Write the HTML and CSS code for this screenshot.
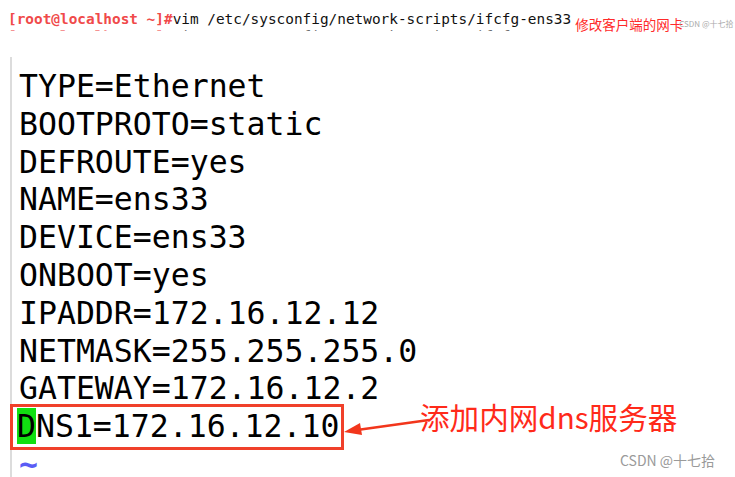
FILE: index.html
```html
<!DOCTYPE html>
<html lang="zh">
<head>
<meta charset="utf-8">
<link rel="stylesheet" href="styles.css">
</head>
<body>
<div class="shot">
  <div class="term">
    <div class="row">
      <div class="cmd"><span class="prompt">[root@localhost ~]#</span>vim /etc/sysconfig/network-scripts/ifcfg-ens33</div>
      <div class="note-top">修改客户端的网卡</div>
      <div class="wm-top">CSDN @十七拾</div>
    </div>
    <div class="clip"><div class="cmd"><span class="prompt">[root@localhost ~]#</span>vim /etc/sysconfig/network-scripts/ifcfg-ens33</div></div>
  </div>
  <div class="editor">
    <div class="gutter"></div>
    <div class="lines">
      <div class="line">TYPE=Ethernet</div>
      <div class="line">BOOTPROTO=static</div>
      <div class="line">DEFROUTE=yes</div>
      <div class="line">NAME=ens33</div>
      <div class="line">DEVICE=ens33</div>
      <div class="line">ONBOOT=yes</div>
      <div class="line">IPADDR=172.16.12.12</div>
      <div class="line">NETMASK=255.255.255.0</div>
      <div class="line">GATEWAY=172.16.12.2</div>
      <div class="line boxed"><span class="cursor">D</span>NS1=172.16.12.10</div>
      <div class="line tilde">~</div>
    </div>
  </div>
  <svg class="arrow" width="90" height="30" viewBox="0 0 90 30">
    <line x1="86" y1="6" x2="14" y2="16" stroke="#f2361c" stroke-width="2.5"/>
    <polygon points="1,18 17,9 19,21" fill="#f2361c"/>
  </svg>
  <div class="note-dns">添加内网dns服务器</div>
  <div class="wm-bottom">CSDN @十七拾</div>
</div>
</body>
</html>
```
FILE: styles.css
```css
html, body {
  margin: 0;
  padding: 0;
  background: #ffffff;
}
.shot {
  position: relative;
  width: 735px;
  height: 477px;
  overflow: hidden;
  background: #ffffff;
}
.term {
  display: flex;
  flex-direction: column;
  padding: 8px 0 0 8px;
}
.row {
  display: flex;
  align-items: flex-end;
  height: 21px;
}
.cmd {
  font-family: "DejaVu Sans Mono", monospace;
  font-size: 14.4px;
  line-height: 20px;
  color: #111;
  white-space: pre;
}
.prompt {
  color: #f04a4a;
  font-weight: bold;
}
.clip {
  height: 2px;
  overflow: hidden;
  opacity: 0.6;
}
.clip .cmd {
  line-height: 13px;
  margin-top: 1px;
}
.note-top {
  font-family: "Noto Sans CJK SC", sans-serif;
  font-size: 13.5px;
  line-height: 18px;
  color: #ff2a2a;
  margin-left: 4px;
  margin-bottom: -4px;
}
.wm-top {
  font-family: "Noto Sans CJK SC", sans-serif;
  font-size: 8px;
  color: #aaaaaa;
  margin-left: -4px;
}
.editor {
  display: flex;
  margin-top: 26px;
}
.gutter {
  width: 2px;
  margin-left: 10px;
  background: #dcdcdc;
  height: 430px;
}
.lines {
  padding: 11px 0 0 7px;
  font-family: "DejaVu Sans Mono", monospace;
  font-size: 31.5px;
  line-height: 37.8px;
  color: #000;
}
.line {
  white-space: pre;
}
.boxed {
  width: fit-content;
  margin: -4px 0 -4px -9px;
  padding: 1px 2px 1px 4px;
  border: 3px solid #f0402a;
}
.cursor {
  background: #11e011;
}
.tilde {
  color: #5a5cf5;
  font-weight: bold;
}
.arrow {
  position: absolute;
  left: 343px;
  top: 414px;
}
.note-dns {
  position: absolute;
  left: 420px;
  top: 399px;
  font-family: "Noto Sans CJK SC", sans-serif;
  font-size: 29.6px;
  line-height: 36px;
  color: #ff2a1a;
}
.wm-bottom {
  position: absolute;
  left: 620px;
  top: 450px;
  font-family: "Noto Sans CJK SC", sans-serif;
  font-size: 14px;
  line-height: 20px;
  color: #9a9a9a;
}
```
